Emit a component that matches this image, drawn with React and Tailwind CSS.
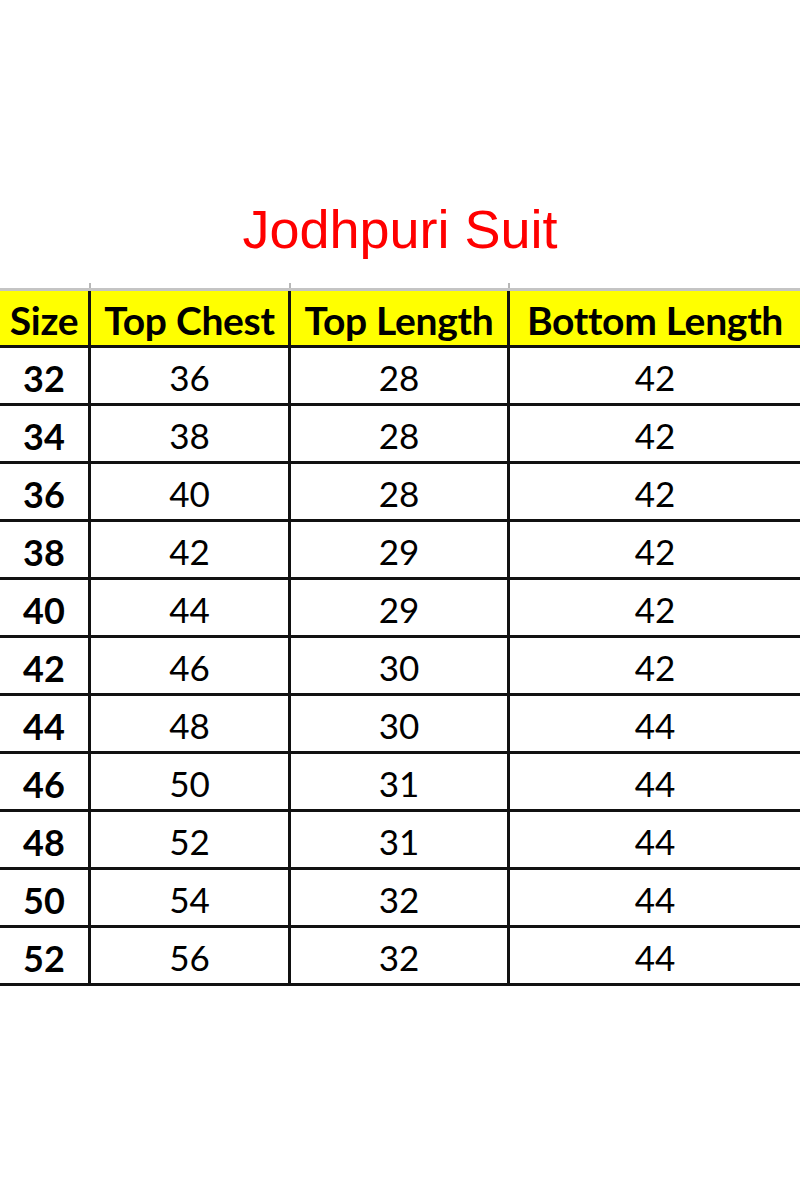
const rows = [
  ['32', '36', '28', '42'],
  ['34', '38', '28', '42'],
  ['36', '40', '28', '42'],
  ['38', '42', '29', '42'],
  ['40', '44', '29', '42'],
  ['42', '46', '30', '42'],
  ['44', '48', '30', '44'],
  ['46', '50', '31', '44'],
  ['48', '52', '31', '44'],
  ['50', '54', '32', '44'],
  ['52', '56', '32', '44'],
]

const headers = ['Size', 'Top Chest', 'Top Length', 'Bottom Length']

const cols = 'grid grid-cols-[91px_200px_219px_1fr]'

export default function App() {
  return (
    <div className="min-h-[1200px] w-[800px] bg-white">
      <h1 className="pt-[202px] text-center font-['Liberation_Sans',Arial,sans-serif] text-[54px] leading-none text-[#ff0000]">
        Jodhpuri Suit
      </h1>

      <div className="mt-[27px] font-['Lato','Open_Sans',sans-serif] text-black">
        <div className={`${cols} h-[5px]`}>
          {headers.map((h, i) => (
            <div key={h} className={i < 3 ? 'border-r-2 border-[#b8b8b8]' : ''} />
          ))}
        </div>
        <div className={`${cols} border-t-[3px] border-[#c4c4c4]`}>
          {headers.map((h, i) => (
            <div
              key={h}
              className={`flex h-[57px] items-center justify-center border-b-[3px] border-[#111] bg-[#ffff00] pt-1 text-[39px] font-bold tracking-[-0.3px] ${
                i < 3 ? 'border-r-[3px]' : ''
              }`}
            >
              {h}
            </div>
          ))}
        </div>
        {rows.map((r) => (
          <div key={r[0]} className={cols}>
            {r.map((v, i) => (
              <div
                key={i}
                className={`flex h-[58px] items-center justify-center border-b-[3px] border-[#111] pt-1 text-[35px] ${
                  i === 0 ? 'font-bold text-[36px]' : 'font-normal'
                } ${i < 3 ? 'border-r-[3px]' : ''}`}
              >
                {v}
              </div>
            ))}
          </div>
        ))}
      </div>
    </div>
  )
}
